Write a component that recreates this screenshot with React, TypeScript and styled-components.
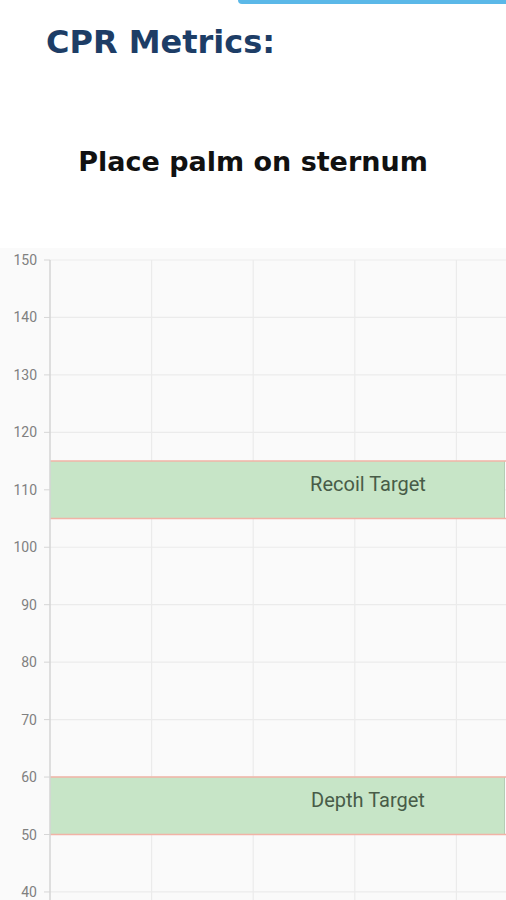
import styled, { createGlobalStyle } from "styled-components";

const GlobalStyle = createGlobalStyle`
  html, body {
    margin: 0;
    padding: 0;
    background: #ffffff;
  }
  body {
    font-family: "DejaVu Sans", "Open Sans", sans-serif;
    overflow: hidden;
  }
`;

const TICKS = [150, 140, 130, 120, 110, 100, 90, 80, 70, 60, 50, 40];
const COLUMNS = [151.6, 253.2, 354.8, 456.4];
const TARGETS = [
  { label: "Recoil Target", from: 105, to: 115 },
  { label: "Depth Target", from: 50, to: 60 },
];

const AXIS_X = 50;
const TOP_Y = 12;
const STEP = 5.745; // px per unit

const toY = (v: number) => TOP_Y + (150 - v) * STEP;

export default function App() {
  return (
    <>
      <GlobalStyle />
      <Page>
        <TopAccent />
        <Title>CPR Metrics:</Title>
        <Prompt>Place palm on sternum</Prompt>
        <ChartPanel>
          <svg width="506" height="652" viewBox="0 0 506 652">
            {TICKS.map((t) => (
              <g key={t}>
                <line x1={AXIS_X} x2={506} y1={toY(t)} y2={toY(t)} stroke="#ebebeb" strokeWidth={1.2} />
                <line x1={44} x2={AXIS_X} y1={toY(t)} y2={toY(t)} stroke="#d6d6d6" strokeWidth={1} />
                <text
                  x={37}
                  y={toY(t) + 5}
                  textAnchor="end"
                  fontFamily="Roboto, sans-serif"
                  fontSize={14}
                  fill="#808080"
                >
                  {t}
                </text>
              </g>
            ))}
            {COLUMNS.map((x) => (
              <line key={x} x1={x} x2={x} y1={TOP_Y} y2={652} stroke="#ebebeb" strokeWidth={1.2} />
            ))}
            {TARGETS.map((b) => (
              <g key={b.label}>
                <rect
                  x={AXIS_X}
                  y={toY(b.to)}
                  width={505 - AXIS_X}
                  height={toY(b.from) - toY(b.to)}
                  fill="#c7e5c7"
                />
                <line x1={504.5} x2={504.5} y1={toY(b.to)} y2={toY(b.from)} stroke="#b5cdb5" />
                <line x1={AXIS_X} x2={506} y1={toY(b.to)} y2={toY(b.to)} stroke="#f1b3a6" strokeWidth={1.5} />
                <line x1={AXIS_X} x2={506} y1={toY(b.from)} y2={toY(b.from)} stroke="#f1b3a6" strokeWidth={1.5} />
                <text
                  x={368}
                  y={toY(b.to) + 30}
                  textAnchor="middle"
                  fontFamily="Roboto, sans-serif"
                  fontSize={20}
                  fill="#485c48"
                >
                  {b.label}
                </text>
              </g>
            ))}
            <line x1={AXIS_X} x2={AXIS_X} y1={TOP_Y} y2={652} stroke="#d4d4d4" strokeWidth={1.5} />
          </svg>
        </ChartPanel>
      </Page>
    </>
  );
}

const Page = styled.div`
  display: flex;
  flex-direction: column;
  width: 506px;
  height: 900px;
  overflow: hidden;
`;

const TopAccent = styled.div`
  align-self: flex-end;
  width: 268px;
  height: 4px;
  background: #5bb8e8;
  border-bottom-left-radius: 4px;
`;

const Title = styled.h1`
  margin: 19px 0 0 46px;
  font-size: 32px;
  line-height: 38px;
  font-weight: 700;
  color: #1d3d66;
`;

const Prompt = styled.h2`
  margin: 85px 0 0;
  text-align: center;
  font-size: 27px;
  line-height: 32px;
  font-weight: 700;
  color: #111111;
`;

const ChartPanel = styled.div`
  margin-top: 70px;
  background: #fafafa;
  flex: 1;

  svg {
    display: block;
  }
`;
